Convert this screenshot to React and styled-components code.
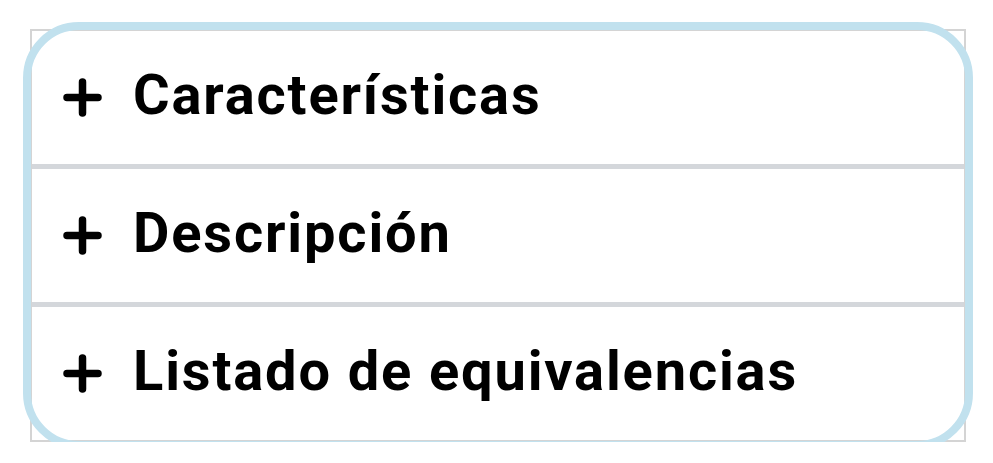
import React from "react";
import styled, { createGlobalStyle } from "styled-components";

const Global = createGlobalStyle`
  html, body { margin: 0; padding: 0; background: #fff; }
  body { font-family: Roboto, "Noto Sans", sans-serif; }
`;

const Page = styled.div`
  padding: 29px 0 0 30px;
`;

const Accordion = styled.div`
  position: relative;
  width: 936px;
  box-sizing: border-box;
  border: 2px solid #d4d4d4;
  display: flex;
  flex-direction: column;

  &::after {
    content: "";
    position: absolute;
    inset: -9px;
    border: 8px solid #c1e1ee;
    border-radius: 56px;
    pointer-events: none;
  }
`;

const Row = styled.div`
  height: 133px;
  display: flex;
  align-items: center;
  gap: 31px;
  padding-left: 31px;
  border-top: ${(p) => (p.$first ? "none" : "5px solid #d4d7db")};
`;

const Title = styled.span`
  font-family: Roboto, sans-serif;
  font-weight: 700;
  font-size: 56px;
  letter-spacing: 1.85px;
  color: #000;
  line-height: 1;
  padding-bottom: 6px;
`;

const PlusIcon = () => (
  <svg width="39" height="39" viewBox="0 0 39 39" aria-hidden="true">
    <path
      d="M19.5 4V35M4 19.5H35"
      stroke="#000"
      strokeWidth="7.5"
      strokeLinecap="round"
      fill="none"
    />
  </svg>
);

const items = ["Características", "Descripción", "Listado de equivalencias"];

export default function App() {
  return (
    <>
      <Global />
      <Page>
        <Accordion>
          {items.map((t, i) => (
            <Row key={t} $first={i === 0}>
              <PlusIcon />
              <Title>{t}</Title>
            </Row>
          ))}
        </Accordion>
      </Page>
    </>
  );
}
